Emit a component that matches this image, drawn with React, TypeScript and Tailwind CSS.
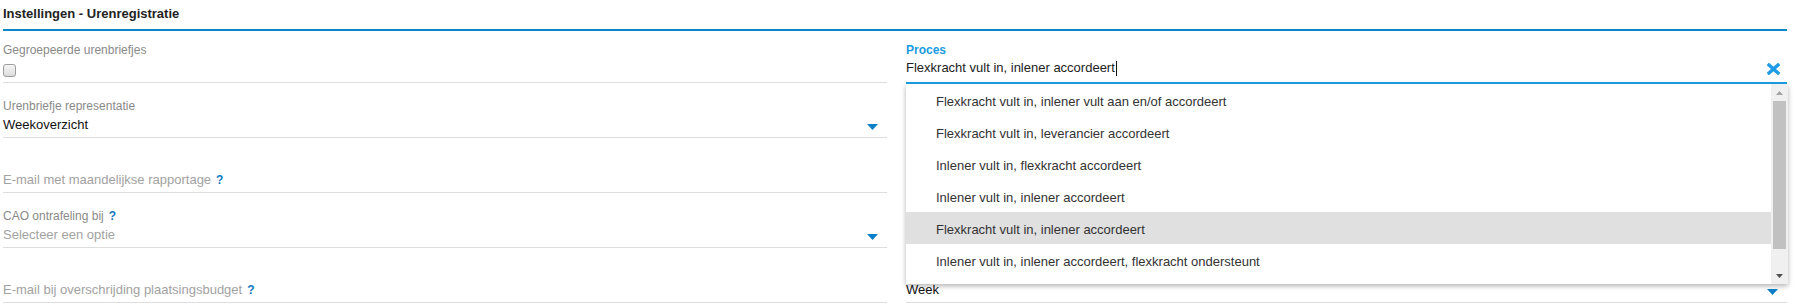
import type { ReactNode } from "react";

const options = [
  "Flexkracht vult in, inlener vult aan en/of accordeert",
  "Flexkracht vult in, leverancier accordeert",
  "Inlener vult in, flexkracht accordeert",
  "Inlener vult in, inlener accordeert",
  "Flexkracht vult in, inlener accordeert",
  "Inlener vult in, inlener accordeert, flexkracht ondersteunt",
];

function Caret() {
  return (
    <svg width="11" height="6" viewBox="0 0 11 6" className="mt-[3px] shrink-0">
      <path d="M0 0h11L5.5 6z" fill="#0b7fc7" />
    </svg>
  );
}

function Help() {
  return <span className="ml-[5px] text-[12px] font-bold text-[#1478c0]">?</span>;
}

function Field({ label, value, tone = "value", select, h = "h-[55px]" }: { label?: ReactNode; value?: ReactNode; tone?: "value" | "placeholder"; select?: boolean; h?: string }) {
  return (
    <div className={`${h} flex flex-col justify-end border-b border-[#dedede]`}>
      {label && <div className="mb-[2px] text-[12px] leading-[14px] text-[#8a8a8a]">{label}</div>}
      <div className={`mb-[2px] flex h-[20px] items-center justify-between pr-[9px] text-[13px] leading-[20px] ${tone === "value" ? "text-[#111]" : "text-[#a2a2a2]"}`}>
        <span className="flex items-center">{value}</span>
        {select && <Caret />}
      </div>
    </div>
  );
}

function Scrollbar() {
  return (
    <div className="flex w-[17px] shrink-0 flex-col bg-[#f0f0f0]">
      <div className="flex h-[17px] items-center justify-center">
        <svg width="7" height="4" viewBox="0 0 7 4"><path d="M0 4h7L3.5 0z" fill="#a3a3a3" /></svg>
      </div>
      <div className="mx-[2px] h-[148px] bg-[#c1c1c1]" />
      <div className="flex-1" />
      <div className="flex h-[17px] items-center justify-center">
        <svg width="7" height="4" viewBox="0 0 7 4"><path d="M0 0h7L3.5 4z" fill="#505050" /></svg>
      </div>
    </div>
  );
}

export default function App() {
  return (
    <div className="h-[308px] w-[1795px] overflow-hidden bg-white pl-[3px] pr-[8px] font-['Liberation_Sans',Arial,sans-serif]">
      <div className="flex h-[31px] items-center border-b-2 border-[#0b86c9] pb-[1px]">
        <h1 className="text-[13px] font-bold text-[#222]">Instellingen - Urenregistratie</h1>
      </div>

      <div className="grid grid-cols-[884px_881px] gap-x-[19px]">
        <div className="flex flex-col">
          <div className="h-[52px] border-b border-[#dedede] pt-[12px]">
            <div className="text-[12px] leading-[14px] text-[#8a8a8a]">Gegroepeerde urenbriefjes</div>
            <input type="checkbox" className="mt-[7px] block h-[13px] w-[13px] appearance-none rounded-[3px] border border-[#9c9c9c] bg-gradient-to-b from-[#f6f6f6] to-[#dcdcdc]" />
          </div>
          <Field label="Urenbriefje representatie" value="Weekoverzicht" select />
          <Field value={<>E-mail met maandelijkse rapportage<Help /></>} tone="placeholder" />
          <Field label={<>CAO ontrafeling bij<Help /></>} value="Selecteer een optie" tone="placeholder" select />
          <Field value={<>E-mail bij overschrijding plaatsingsbudget<Help /></>} tone="placeholder" />
        </div>

        <div className="flex flex-col">
          <div className="relative h-[53px] border-b-2 border-[#1ba0e4] pt-[12px]">
            <div className="text-[12px] font-bold leading-[14px] text-[#1a9be0]">Proces</div>
            <div className="mt-[2px] flex h-[18px] items-center justify-between pr-[7px]">
              <span className="flex items-center text-[13px] leading-[18px] text-[#222]">
                Flexkracht vult in, inlener accordeert
                <span className="ml-px inline-block h-[15px] w-px bg-[#111]" />
              </span>
              <svg width="13" height="12" viewBox="0 0 13 12" className="mt-[2px]">
                <path d="M2 2l9 8M11 2l-9 8" stroke="#1e9be4" strokeWidth="3.4" strokeLinecap="square" />
              </svg>
            </div>

            <div className="absolute left-0 right-[-1px] top-[53px] z-10 flex h-[200px] bg-white shadow-[0_2px_5px_rgba(0,0,0,0.3)]">
              <ul className="flex-1 overflow-hidden">
                {options.map((o, i) => (
                  <li key={o} className={`h-[32px] pl-[30px] pt-[2px] text-[13px] leading-[32px] text-[#333] ${i === 4 ? "bg-[#e0e0e0]" : ""}`}>{o}</li>
                ))}
              </ul>
              <Scrollbar />
            </div>
          </div>
          <Field h="h-[54px]" select />
          <Field select />
          <Field select />
          <Field value="Week" select />
        </div>
      </div>
    </div>
  );
}
